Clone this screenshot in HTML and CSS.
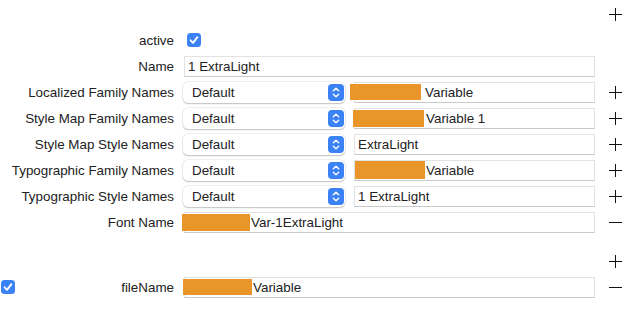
FILE: index.html
```html
<!DOCTYPE html>
<html>
<head>
<meta charset="utf-8">
<link rel="stylesheet" href="styles.css">
</head>
<body>
<div class="form">
  <div class="row">
    <div class="label"></div>
    <div class="cell"></div>
    <div class="act"><span class="plus"></span></div>
  </div>
  <div class="row">
    <div class="label">active</div>
    <div class="cell"><span class="check"><svg viewBox="0 0 14 14" width="14" height="14"><rect x="0" y="0" width="14" height="14" rx="3.5" fill="#3b82f7"/><path d="M3.6 7.3 L6 9.8 L10.4 4.2" fill="none" stroke="#fff" stroke-width="1.9" stroke-linecap="round" stroke-linejoin="round"/></svg></span></div>
    <div class="act"></div>
  </div>
  <div class="row">
    <div class="label">Name</div>
    <div class="cell"><div class="field wide"><span class="txt">1 ExtraLight</span></div></div>
    <div class="act"></div>
  </div>
  <div class="row">
    <div class="label">Localized Family Names</div>
    <div class="cell split">
      <div class="popup"><span>Default</span><span class="step"><svg viewBox="0 0 16 17" width="16" height="17"><rect width="16" height="17" rx="4" fill="#3b82f7"/><path d="M5.3 6.8 L8 4.3 L10.7 6.8 M5.3 10.2 L8 12.7 L10.7 10.2" fill="none" stroke="#fff" stroke-width="1.4" stroke-linecap="round" stroke-linejoin="round"/></svg></span></div>
      <div class="field"><span class="red r1"></span><span class="txt">Variable</span></div>
    </div>
    <div class="act"><span class="plus"></span></div>
  </div>
  <div class="row">
    <div class="label">Style Map Family Names</div>
    <div class="cell split">
      <div class="popup"><span>Default</span><span class="step"><svg viewBox="0 0 16 17" width="16" height="17"><rect width="16" height="17" rx="4" fill="#3b82f7"/><path d="M5.3 6.8 L8 4.3 L10.7 6.8 M5.3 10.2 L8 12.7 L10.7 10.2" fill="none" stroke="#fff" stroke-width="1.4" stroke-linecap="round" stroke-linejoin="round"/></svg></span></div>
      <div class="field"><span class="red r2"></span><span class="txt">Variable 1</span></div>
    </div>
    <div class="act"><span class="plus"></span></div>
  </div>
  <div class="row">
    <div class="label">Style Map Style Names</div>
    <div class="cell split">
      <div class="popup"><span>Default</span><span class="step"><svg viewBox="0 0 16 17" width="16" height="17"><rect width="16" height="17" rx="4" fill="#3b82f7"/><path d="M5.3 6.8 L8 4.3 L10.7 6.8 M5.3 10.2 L8 12.7 L10.7 10.2" fill="none" stroke="#fff" stroke-width="1.4" stroke-linecap="round" stroke-linejoin="round"/></svg></span></div>
      <div class="field"><span class="txt pad">ExtraLight</span></div>
    </div>
    <div class="act"><span class="plus"></span></div>
  </div>
  <div class="row">
    <div class="label">Typographic Family Names</div>
    <div class="cell split">
      <div class="popup"><span>Default</span><span class="step"><svg viewBox="0 0 16 17" width="16" height="17"><rect width="16" height="17" rx="4" fill="#3b82f7"/><path d="M5.3 6.8 L8 4.3 L10.7 6.8 M5.3 10.2 L8 12.7 L10.7 10.2" fill="none" stroke="#fff" stroke-width="1.4" stroke-linecap="round" stroke-linejoin="round"/></svg></span></div>
      <div class="field"><span class="red r3"></span><span class="txt">Variable</span></div>
    </div>
    <div class="act"><span class="plus"></span></div>
  </div>
  <div class="row">
    <div class="label">Typographic Style Names</div>
    <div class="cell split">
      <div class="popup"><span>Default</span><span class="step"><svg viewBox="0 0 16 17" width="16" height="17"><rect width="16" height="17" rx="4" fill="#3b82f7"/><path d="M5.3 6.8 L8 4.3 L10.7 6.8 M5.3 10.2 L8 12.7 L10.7 10.2" fill="none" stroke="#fff" stroke-width="1.4" stroke-linecap="round" stroke-linejoin="round"/></svg></span></div>
      <div class="field"><span class="txt pad">1 ExtraLight</span></div>
    </div>
    <div class="act"><span class="plus"></span></div>
  </div>
  <div class="row">
    <div class="label">Font Name</div>
    <div class="cell"><div class="field wide"><span class="red r4"></span><span class="txt">Var-1ExtraLight</span></div></div>
    <div class="act"><span class="minus"></span></div>
  </div>
  <div class="row gap">
    <div class="label"></div>
    <div class="cell"></div>
    <div class="act"><span class="plus"></span></div>
  </div>
  <div class="row">
    <div class="label withcheck"><span class="check"><svg viewBox="0 0 14 14" width="14" height="14"><rect x="0" y="0" width="14" height="14" rx="3.5" fill="#3b82f7"/><path d="M3.6 7.3 L6 9.8 L10.4 4.2" fill="none" stroke="#fff" stroke-width="1.9" stroke-linecap="round" stroke-linejoin="round"/></svg></span><span>fileName</span></div>
    <div class="cell"><div class="field wide"><span class="red r5"></span><span class="txt">Variable</span></div></div>
    <div class="act"><span class="minus"></span></div>
  </div>
</div>
</body>
</html>
```
FILE: styles.css
```css
* { box-sizing: border-box; }
html, body { margin: 0; padding: 0; background: #fff; }
body {
  font-family: "Liberation Sans", Arial, sans-serif;
  font-size: 13.4px;
  color: #222;
  width: 633px;
  height: 335px;
  overflow: hidden;
}
.form {
  display: flex;
  flex-direction: column;
  padding-top: 1px;
}
.row {
  display: grid;
  grid-template-columns: 183px 412px 38px;
  height: 26px;
  align-items: center;
}
.row.gap { margin-top: 13px; }
.label {
  text-align: right;
  padding-right: 9px;
  white-space: nowrap;
}
.label.withcheck {
  display: flex;
  justify-content: space-between;
  align-items: center;
  padding-left: 1px;
}
.check { display: inline-flex; width: 14px; height: 14px; margin-left: 4px; }
.label.withcheck .check { margin-left: 0; }
.cell { display: flex; align-items: center; height: 26px; }
.cell.split { gap: 9px; }
.field {
  height: 21px;
  flex: 1;
  display: flex;
  align-items: center;
  background: #fff;
  border: 1px solid #e2e2e2;
  border-bottom-color: #c9c9c9;
  white-space: nowrap;
}
.field.wide { margin-left: 1px; }
.field.wide > .txt:first-child { padding-left: 3px; }
.txt.pad { padding-left: 3px; }
.popup {
  width: 162px;
  height: 21px;
  flex: none;
  display: flex;
  align-items: center;
  justify-content: space-between;
  padding-left: 9px;
  padding-right: 1px;
  background: #fff;
  border-radius: 5px;
  box-shadow: 0 0 0 0.5px rgba(0,0,0,0.12), 0 1px 1.5px rgba(0,0,0,0.2);
}
.step { display: inline-flex; width: 16px; height: 17px; }
.red {
  display: inline-block;
  background: #e9952a;
  height: 16px;
  margin-right: 4px;
}
.r1 { width: 71px; margin-left: -5px; }
.r2 { width: 71px; margin-left: -2px; margin-right: 2px; height: 17px; }
.r3 { width: 70px; margin-left: 0; margin-right: 1px; height: 18px; }
.r4 { width: 68px; margin-left: -3px; margin-right: 1px; height: 17px; }
.r5 { width: 69px; margin-left: -2px; margin-right: 1px; height: 16px; }
.act {
  display: flex;
  align-items: center;
  padding-left: 14px;
  height: 26px;
}
.plus, .minus {
  position: relative;
  display: inline-block;
  width: 13px;
  height: 13px;
}
.plus::before, .minus::before {
  content: "";
  position: absolute;
  left: 0; right: 0; top: 6px;
  height: 1px;
  background: #111;
}
.plus::after {
  content: "";
  position: absolute;
  top: 0; bottom: 0; left: 6px;
  width: 1px;
  background: #111;
}
```
